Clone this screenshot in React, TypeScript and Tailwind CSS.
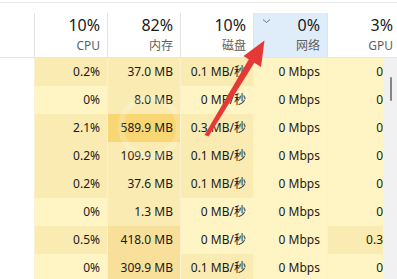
import React from "react";

type Lv = "L" | "M" | "H" | "X";
const bg: Record<Lv, string> = {
  L: "bg-[#fff4c4]",
  M: "bg-[#f9ebb1]",
  H: "bg-[#f9e09a]",
  X: "bg-[#f8d674]",
};

const rows: [string, Lv, string, Lv, string, Lv, string, Lv, string, Lv][] = [
  ["0.2%", "M", "37.0 MB", "M", "0.1 MB/秒", "M", "0 Mbps", "L", "0%", "L"],
  ["0%", "L", "8.0 MB", "M", "0 MB/秒", "L", "0 Mbps", "L", "0%", "L"],
  ["2.1%", "M", "589.9 MB", "X", "0.3 MB/秒", "M", "0 Mbps", "L", "0%", "L"],
  ["0.2%", "M", "109.9 MB", "M", "0.1 MB/秒", "M", "0 Mbps", "L", "0%", "L"],
  ["0.2%", "M", "37.6 MB", "M", "0.1 MB/秒", "M", "0 Mbps", "L", "0%", "L"],
  ["0%", "L", "1.3 MB", "M", "0 MB/秒", "L", "0 Mbps", "L", "0%", "L"],
  ["0.5%", "M", "418.0 MB", "H", "0 MB/秒", "L", "0 Mbps", "L", "0.3%", "M"],
  ["0%", "L", "309.9 MB", "H", "0.1 MB/秒", "M", "0 Mbps", "L", "0%", "L"],
];

const widths = ["w-[73px]", "w-[73px]", "w-[73px]", "w-[74px]", "w-[73px]"];

const headers = [
  { pct: "10%", label: "CPU" },
  { pct: "82%", label: "内存" },
  { pct: "10%", label: "磁盘" },
  { pct: "0%", label: "网络", active: true },
  { pct: "3%", label: "GPU" },
];

export default function App() {
  return (
    <div
      className="relative w-[397px] h-[279px] overflow-hidden bg-white text-[#1a1a1a]"
      style={{ fontFamily: '"Noto Sans", "Noto Sans CJK SC", sans-serif' }}
    >
      {/* header */}
      <div className="h-[58px] border-b border-[#e6e6e6] flex flex-col">
        <div className="h-[3px] border-b border-[#e8e8e8] shrink-0" />
        <div className="flex flex-1 pt-[10px]">
          <div className="w-[34px] shrink-0" />
          {headers.map((h, i) => (
            <div
              key={i}
              className={`${widths[i]} shrink-0 border-l border-[#e3e3e3] relative flex flex-col items-end pr-[7px] ${
                h.active ? "bg-[#dfedfa] border-[#dfedfa]" : ""
              }`}
            >
              {h.active && (
                <svg
                  className="absolute left-[8px] top-[5px]"
                  width="9"
                  height="6"
                  viewBox="0 0 9 6"
                >
                  <path d="M1 1.5 L4.5 4.5 L8 1.5" fill="none" stroke="#6b7280" strokeWidth="1" />
                </svg>
              )}
              <div className="text-[16px] leading-[20px] mt-[2px]">{h.pct}</div>
              <div className="text-[12px] leading-[16px] mt-[3px] text-[#5f5f5f]">{h.label}</div>
            </div>
          ))}
        </div>
      </div>

      {/* body */}
      <div className="flex h-[221px]">
        <div className="w-[383px] overflow-hidden shrink-0">
          <div className="w-[400px] flex flex-col">
            {rows.map((r, ri) => (
              <div key={ri} className="flex h-[28px] text-[12px]">
                <div className="w-[34px] shrink-0 bg-white" />
                {[0, 1, 2, 3, 4].map((c) => (
                  <div
                    key={c}
                    className={`${widths[c]} shrink-0 border-l border-[#fbf1cf] ${bg[r[c * 2 + 1] as Lv]} flex items-center justify-end pr-[7px]`}
                  >
                    {r[c * 2] as string}
                  </div>
                ))}
              </div>
            ))}
          </div>
        </div>
        <div className="w-[14px] shrink-0 bg-[#f1f1f1] relative">
          <div className="absolute left-[7px] top-[19px] w-[2px] h-[24px] rounded bg-[#858585]" />
        </div>
      </div>

      {/* watermark ring */}
      <div className="absolute left-[118px] top-[95px] w-[64px] h-[64px] rounded-full border-[6px] border-white/20 pointer-events-none" />

      {/* red arrow */}
      <svg
        className="absolute left-0 top-0 pointer-events-none"
        width="397"
        height="279"
        viewBox="0 0 397 279"
      >
        <polygon
          points="204.5,135 208.5,136.5 254.5,62.5 249,59"
          fill="#e53935"
        />
        <polygon points="264.5,40.5 243.5,56 261,67" fill="#e53935" />
      </svg>
    </div>
  );
}
